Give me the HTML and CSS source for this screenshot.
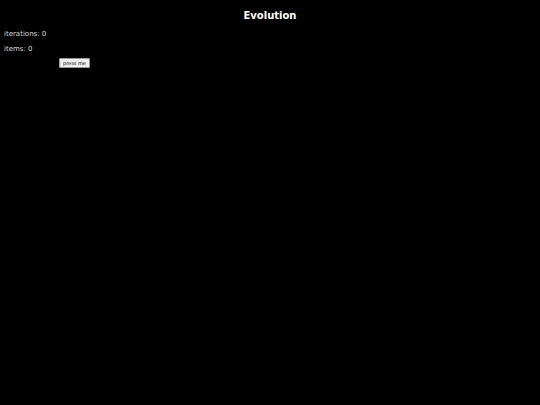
FILE: index.html
```html
<!DOCTYPE html>
<html>
<head>
<meta charset="utf-8">
<link rel="stylesheet" href="styles.css">
</head>
<body>
<h1 class="title">Evolution</h1>
<p class="stat">iterations: 0</p>
<p class="stat">items: 0</p>
<div class="controls"><button class="btn">press me</button></div>
</body>
</html>
```
FILE: styles.css
```css
html, body {
  margin: 0;
  padding: 0;
  background: #000;
  color: #fff;
  font-family: "DejaVu Sans", sans-serif;
}
body {
  padding: 9px 4px;
}
.title {
  margin: 0;
  font-size: 10px;
  font-weight: bold;
  text-align: center;
  line-height: 13px;
}
.stat {
  margin: 0;
  font-size: 7px;
  line-height: 9px;
  color: #ddd;
}
.title + .stat { margin-top: 8px; }
.stat + .stat { margin-top: 6px; }
.controls {
  margin-top: 4px;
  padding-left: 55px;
}
.btn {
  display: block;
  font-family: "DejaVu Sans", sans-serif;
  font-size: 5px;
  padding: 1px 3px;
  background: #eee;
  color: #000;
  border: 1px solid #999;
  border-radius: 1px;
  line-height: 6px;
}
```
